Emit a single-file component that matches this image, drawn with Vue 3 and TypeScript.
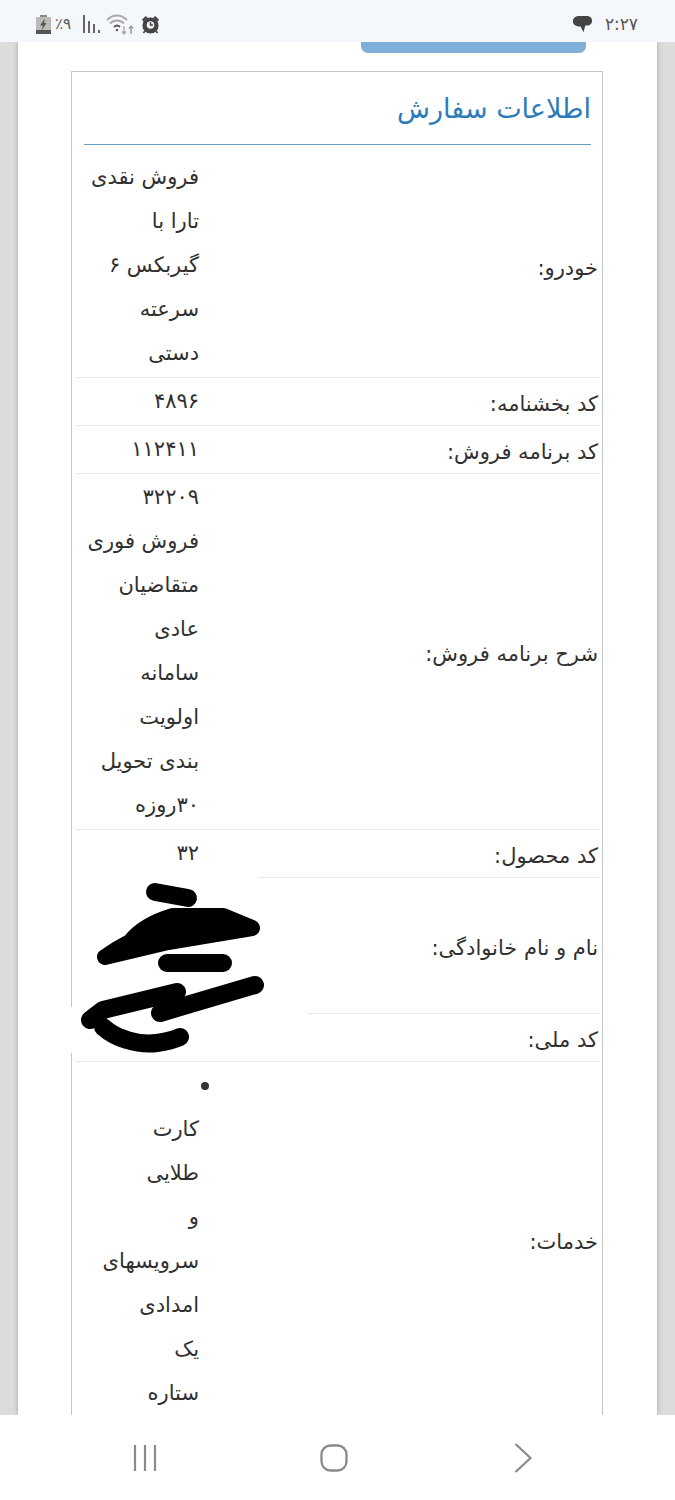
<script setup lang="ts">
interface Row { label: string; lines: string[]; bullet?: boolean; blank?: number }
const rows: Row[] = [
  { label: 'خودرو:', lines: ['فروش نقدی', 'تارا با', 'گیربکس ۶', 'سرعته', 'دستی'] },
  { label: 'کد بخشنامه:', lines: ['۴۸۹۶'] },
  { label: 'کد برنامه فروش:', lines: ['۱۱۲۴۱۱'] },
  { label: 'شرح برنامه فروش:', lines: ['۳۲۲۰۹', 'فروش فوری', 'متقاضیان', 'عادی', 'سامانه', 'اولویت', 'بندی تحویل', '۳۰روزه'] },
  { label: 'کد محصول:', lines: ['۳۲'] },
  { label: 'نام و نام خانوادگی:', lines: [], blank: 3 },
  { label: 'کد ملی:', lines: [], blank: 1 },
  { label: 'خدمات:', lines: ['کارت', 'طلایی', 'و', 'سرویسهای', 'امدادی', 'یک', 'ستاره'], bullet: true },
]
</script>

<template>
  <div class="screen">
    <header class="status">
      <div class="status-side">
        <svg class="ic" width="15" height="19" viewBox="0 0 15 19">
          <rect x="4" y="0" width="7" height="2" fill="#888" />
          <rect x="0" y="2" width="15" height="17" rx="1" fill="#bbb" />
          <rect x="0" y="15" width="15" height="4" fill="#555" />
          <path d="M9 3.500 4 10.500h3l-1.500 5 5-7.500H8z" fill="#555" />
        </svg>
        <span class="pct">٪۹</span>
        <svg class="ic bars" width="17" height="18" viewBox="0 0 17 18" fill="#666">
          <rect x="0" y="0" width="2" height="18" />
          <rect x="5" y="6" width="2" height="12" />
          <rect x="10" y="9" width="2" height="9" />
          <rect x="15" y="15" width="2" height="3" />
        </svg>
        <svg class="ic wifi" width="28" height="22" viewBox="0 0 28 22" fill="none">
          <path d="M1 7c6-6 14-6 20 0" stroke="#aaa" stroke-width="1.800" />
          <path d="M4 10.500c4-4 10-4 14 0" stroke="#aaa" stroke-width="1.800" />
          <path d="M8 14c2-2 4-2 6 0" stroke="#555" stroke-width="1.800" />
          <circle cx="11" cy="17" r="1.200" fill="#555" />
          <path d="M18 13v8m-2-2.500 2 2.500 2-2.500" stroke="#aaa" stroke-width="1.400" />
          <path d="M25 21v-8m-2 2.500 2-2.500 2 2.500" stroke="#999" stroke-width="1.400" />
        </svg>
        <svg class="ic clock" width="19" height="19" viewBox="0 0 20 20">
          <circle cx="10" cy="11" r="8.500" fill="#444" />
          <circle cx="10" cy="10.500" r="4" fill="#eef1f5" />
          <path d="M10 7.500v3h2.500" stroke="#444" stroke-width="1.500" fill="none" />
          <path d="M1 5l4-4 2 1.500-4.500 4.500zM19 5l-4-4-2 1.500 4.500 4.500z" fill="#444" />
          <path d="M4 17l-1.500 2M16 17l1.500 2" stroke="#444" stroke-width="1.800" />
        </svg>
      </div>
      <div class="status-side">
        <svg class="ic" width="21" height="21" viewBox="0 0 22 22">
          <path d="M8 2h7c4 0 6 2 6 5s-2 5-5 5h-2l-2 7-3-6c-5 0-8-2-8-5.500C1 4 4 2 8 2z" fill="#444" />
        </svg>
        <span class="time">۲:۲۷</span>
      </div>
    </header>

    <main class="page">
      <div class="panel">
        <div class="cut-button"></div>
        <section class="card">
          <h2 class="title">اطلاعات سفارش</h2>
          <hr class="rule" />
          <div class="table">
            <div v-for="row in rows" :key="row.label" class="row">
              <div class="label">{{ row.label }}</div>
              <div class="value">
                <div v-if="row.bullet" class="line bullet-line"><span class="bullet"></span></div>
                <div v-for="line in row.lines" :key="line" class="line">{{ line }}</div>
                <div v-for="n in row.blank ?? 0" :key="n" class="line"></div>
              </div>
            </div>
          </div>
        </section>
        <svg class="scribble" width="260" height="200" viewBox="0 0 260 200" fill="none" stroke="#000" stroke-linecap="round" stroke-linejoin="round">
          <rect x="5" y="5" width="185" height="6" fill="#fff" stroke="none" />
          <rect x="0" y="137" width="240" height="46" fill="#fff" stroke="none" />
          <path d="M87 22 120 28" stroke-width="18" />
          <path d="M37 87Q50 78 62 72 75 55 105 46L155 46 184 58 100 72Z" fill="#000" stroke-width="16" />
          <path d="M99 93H155" stroke-width="18" />
          <path d="M22 150 35 140 109 122" stroke-width="18" />
          <path d="M92 143 187 115" stroke-width="18" />
          <path d="M35 157Q45 166 59 170 75 175 89 173T112 167" stroke-width="18" />
        </svg>
      </div>
    </main>

    <footer class="nav">
      <svg width="30" height="30" viewBox="0 0 30 30" stroke="#8a8a8a" stroke-width="2.200" fill="none">
        <path d="M4 2v26M14 2v26M24 2v26" />
      </svg>
      <svg width="30" height="30" viewBox="0 0 30 30" stroke="#8a8a8a" stroke-width="2.300" fill="none">
        <rect x="2.500" y="2.500" width="25" height="25" rx="9" />
      </svg>
      <svg width="30" height="30" viewBox="0 0 30 30" stroke="#8a8a8a" stroke-width="2.200" fill="none">
        <path d="M8.500 1 23.500 15 8.500 29" />
      </svg>
    </footer>
  </div>
</template>

<style scoped>
.screen {
  width: 675px;
  height: 1500px;
  display: flex;
  flex-direction: column;
  overflow: hidden;
  font-family: "DejaVu Sans", "Noto Sans", sans-serif;
  color: #333;
}
.status {
  height: 42px;
  flex: none;
  background: #f4f7fb;
  display: flex;
  justify-content: space-between;
  align-items: center;
  padding: 6px 37px 0 36px;
  box-sizing: border-box;
}
.status-side {
  display: flex;
  align-items: center;
  gap: 4px;
}
.ic { display: block; }
.pct { font-size: 15px; color: #555; width: 19px; }
.bars { margin-left: 5px; }
.wifi { margin-left: 2px; }
.clock { margin-left: 3px; }
.time { font-size: 17px; color: #555; margin-left: 8px; letter-spacing: .5px; }
.page {
  flex: 1;
  min-height: 0;
  overflow: hidden;
  background: #dcdcdc;
  padding: 0 18px;
}
.panel {
  position: relative;
  background: #fff;
  height: 100%;
  box-shadow: 0 0 5px rgba(0, 0, 0, .25);
  direction: rtl;
}
.cut-button {
  width: 225px;
  height: 11px;
  margin: 0 71px 0 0;
  background: #7fafd8;
  border-radius: 0 0 7px 7px;
}
.card {
  margin: 18px 54px 0 53px;
  border: 1px solid #c4c4c4;
  padding-bottom: 40px;
}
.title {
  margin: 0 11px 0 12px;
  padding-top: 18px;
  height: 72px;
  box-sizing: border-box;
  font-size: 27px;
  line-height: 38px;
  font-weight: 400;
  color: #2b7cb9;
}
.rule {
  margin: 0 11px 9px 12px;
  border: 0;
  height: 1px;
  background: #6a9fbf;
}
.table { margin: 0 2px 0 4px; }
.row {
  display: grid;
  grid-template-columns: 1fr 123px;
  align-items: center;
  border-bottom: 1px solid #e9e9e9;
  padding: 2px 0 1px;
}
.label {
  font-size: 21px;
  line-height: 40px;
  padding-right: 2px;
  color: #303030;
  padding-top: 4px;
}
.value { font-size: 21px; color: #303030; }
.line { height: 44px; line-height: 42px; white-space: nowrap; }
.bullet-line { position: relative; }
.bullet {
  position: absolute;
  right: -10px;
  top: 18px;
  width: 8px;
  height: 8px;
  border-radius: 50%;
  background: #333;
}
.scribble {
  position: absolute;
  left: 50px;
  top: 828px;
  direction: ltr;
}
.nav {
  height: 85px;
  flex: none;
  background: #fff;
  display: flex;
  align-items: center;
  justify-content: space-between;
  padding: 0 138px 0 131px;
  box-sizing: border-box;
}
</style>

<style>
html, body { margin: 0; background: #fff; }
</style>
